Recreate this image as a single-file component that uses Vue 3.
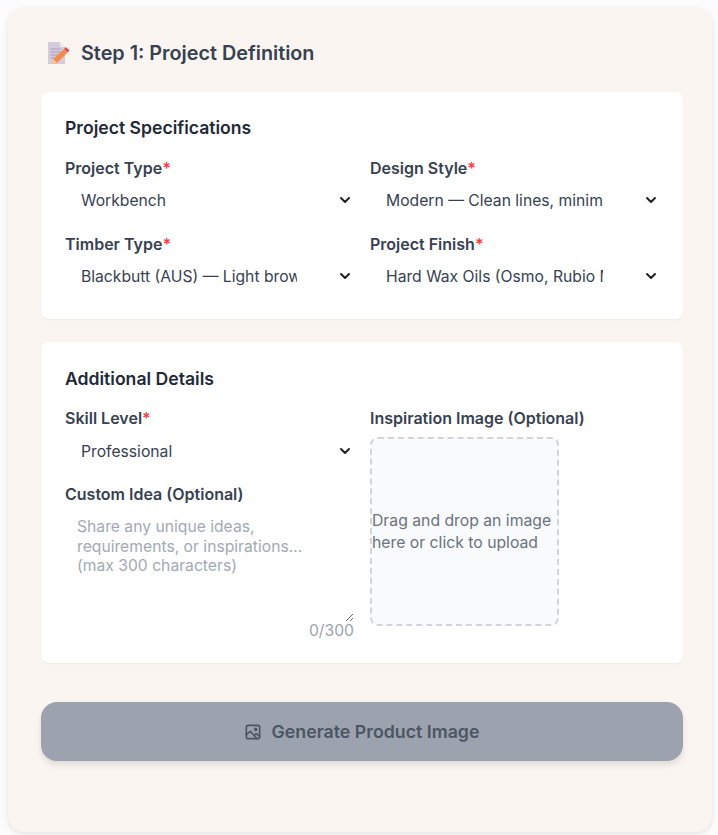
<template>
  <div class="page">
    <section class="step-card">
      <h2 class="step-title">
        <svg class="memo" width="24" height="24" viewBox="0 0 24 24">
          <path d="M2 1h12l5 5v17H2z" fill="#d5cbdc" />
          <path d="M14 1l5 5h-5z" fill="#eeeaf1" />
          <path d="M4.5 8h10M4.5 11h10M4.5 14h7M4.5 17h4" stroke="#a99fb4" stroke-width="1.2" />
          <path d="M6 23l1.200-5L18 8l3.500 3.500L11 22z" fill="#f58a4b" />
          <path d="M18 8l2-2 3.500 3.500-2 2z" fill="#e5484d" />
          <path d="M6 23l1.200-5 3.800 4z" fill="#f8c9a0" />
        </svg>
        Step 1: Project Definition
      </h2>

      <div class="panel">
        <h3 class="panel-title">Project Specifications</h3>
        <div class="spec-grid">
          <div class="field" v-for="f in specFields" :key="f.label">
            <label>{{ f.label }}<span class="req">*</span></label>
            <select>
              <option>{{ f.value }}</option>
            </select>
          </div>
        </div>
      </div>

      <div class="panel panel-details">
        <h3 class="panel-title">Additional Details</h3>
        <div class="details-grid">
          <div class="details-col">
            <div class="field">
              <label>Skill Level<span class="req">*</span></label>
              <select>
                <option>Professional</option>
              </select>
            </div>
            <div class="field">
              <label>Custom Idea (Optional)</label>
              <textarea :placeholder="ideaPlaceholder" maxlength="300"></textarea>
              <div class="counter">0/300</div>
            </div>
          </div>
          <div class="field">
            <label>Inspiration Image (Optional)</label>
            <div class="dropzone">Drag and drop an image here or click to upload</div>
          </div>
        </div>
      </div>

      <button class="generate-btn" disabled>
        <svg width="16" height="16" viewBox="0 0 24 24" fill="none" stroke="currentColor" stroke-width="2.400" stroke-linecap="round" stroke-linejoin="round">
          <rect x="2" y="2" width="20" height="20" rx="3" />
          <circle cx="16" cy="8" r="1.500" />
          <path d="M2 16l6-5 10 11M14 17l3-2.500 5 4.500" />
        </svg>
        Generate Product Image
      </button>
    </section>
  </div>
</template>

<script setup>
const specFields = [
  { label: "Project Type", value: "Workbench" },
  { label: "Design Style", value: "Modern — Clean lines, minimal details" },
  { label: "Timber Type", value: "Blackbutt (AUS) — Light brown, durable" },
  { label: "Project Finish", value: "Hard Wax Oils (Osmo, Rubio Monocoat)" }
]

const ideaPlaceholder = "Share any unique ideas, requirements, or inspirations... (max 300 characters)"
</script>

<style scoped>
.page {
  padding: 8px 6px 3px 8px;
  background: #fcfcfc;
  font-family: Inter, "Liberation Sans", sans-serif;
}

.step-card {
  background: #faf5f1;
  border-radius: 16px;
  padding: 33px 29px 71px 33px;
  box-shadow: 0 2px 6px rgba(0, 0, 0, 0.1);
}

.step-title {
  display: flex;
  align-items: center;
  gap: 11px;
  height: 24px;
  margin: 0 0 27px 5px;
  font-size: 19.800px;
  font-weight: 600;
  color: #374151;
}

.panel {
  background: #fff;
  border-radius: 8px;
  padding: 24px 22px 25px 24px;
  margin-bottom: 23px;
  box-shadow: 0 1px 2px rgba(0, 0, 0, 0.04);
}

.panel-details {
  margin-bottom: 39px;
  padding-top: 25px;
  height: 321px;
  box-sizing: border-box;
}

.panel-title {
  margin: 0 0 18px;
  font-size: 17.600px;
  line-height: 24px;
  font-weight: 600;
  color: #1f2937;
}

.panel-details .panel-title {
  margin-bottom: 17px;
}

.spec-grid,
.details-grid {
  display: grid;
  grid-template-columns: 289px 290px;
  gap: 16px;
}

.details-col {
  display: flex;
  flex-direction: column;
  gap: 16px;
}

.details-col select {
  margin: 1px 0 -1px;
}

.field {
  display: flex;
  flex-direction: column;
}

label {
  font-size: 16px;
  line-height: 20px;
  font-weight: 600;
  color: #374151;
  margin-bottom: 4px;
}

.req {
  color: #ef4444;
}

select {
  appearance: none;
  height: 36px;
  border: none;
  padding: 0 57px 0 16px;
  font-family: inherit;
  font-size: 15.700px;
  color: #374151;
  background-color: #fff;
  background-image: url("data:image/svg+xml,%3Csvg xmlns='http://www.w3.org/2000/svg' width='12' height='12' viewBox='0 0 12 12' fill='none' stroke='%23222' stroke-width='2' stroke-linecap='round' stroke-linejoin='round'%3E%3Cpath d='M2 4l4 4 4-4'/%3E%3C/svg%3E");
  background-repeat: no-repeat;
  background-position: right 3.500px center;
}

textarea {
  display: block;
  box-sizing: border-box;
  height: 114px;
  padding: 9px 20px 8px 12px;
  border: none;
  outline: none;
  font-family: inherit;
  font-size: 15.700px;
  line-height: 19.500px;
  color: #374151;
}

textarea::placeholder {
  color: #a3a9b3;
}

.counter {
  font-size: 15.700px;
  line-height: 20px;
  color: #9ca3af;
  text-align: right;
  margin-top: -1px;
}

.dropzone {
  box-sizing: border-box;
  width: 189px;
  height: 189px;
  margin-top: 5px;
  display: flex;
  align-items: center;
  border: 2px dashed #d1d5db;
  border-radius: 8px;
  background: #f9fafb;
  font-size: 15.750px;
  line-height: 22px;
  color: #6b7280;
}

.generate-btn {
  display: flex;
  align-items: center;
  justify-content: center;
  gap: 11px;
  width: 100%;
  height: 59px;
  border: none;
  border-radius: 16px;
  background: #9ca3af;
  font-family: inherit;
  font-size: 17.750px;
  font-weight: 600;
  color: #4b5563;
  box-shadow: 0 4px 6px rgba(0, 0, 0, 0.1);
}
</style>

<style>
body {
  background: #fcfcfc;
}
</style>
